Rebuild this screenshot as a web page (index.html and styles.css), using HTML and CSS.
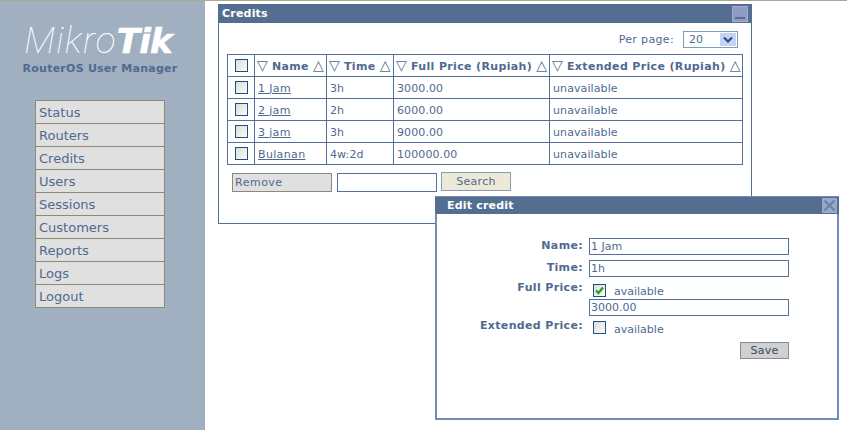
FILE: index.html
```html
<!DOCTYPE html>
<html lang="en">
<head>
<meta charset="utf-8">
<title>Credits</title>
<link rel="stylesheet" href="styles.css">
</head>
<body>
<div class="page">
  <aside class="sidebar">
    <div class="logo"><span class="logo-light">Mikro</span><span class="logo-bold">Tik</span></div>
    <div class="subtitle">RouterOS User Manager</div>
    <nav class="nav">
      <a>Status</a><a>Routers</a><a>Credits</a><a>Users</a><a>Sessions</a><a>Customers</a><a>Reports</a><a>Logs</a><a>Logout</a>
    </nav>
  </aside>
  <main class="main">
    <section class="panel">
      <header class="bar"><span class="bar-title">Credits</span><span class="min-btn"><i></i></span></header>
      <div class="perpage">
        <span class="perpage-label">Per page:</span>
        <span class="select"><span>20</span><span class="arrow"><svg width="10" height="7" viewBox="0 0 10 7"><path d="M1 1.5l4 4 4-4" fill="none" stroke="#2f4a7c" stroke-width="2.2"/></svg></span></span>
      </div>
      <table class="grid">
        <colgroup><col class="c1"><col class="c2"><col class="c3"><col class="c4"><col class="c5"></colgroup>
        <thead>
          <tr>
            <th class="check"><span class="cb"></span></th>
            <th><span class="sort">▽</span> Name <span class="sort">△</span></th>
            <th><span class="sort">▽</span> Time <span class="sort">△</span></th>
            <th><span class="sort">▽</span> Full Price (Rupiah) <span class="sort">△</span></th>
            <th><span class="sort">▽</span> Extended Price (Rupiah) <span class="sort">△</span></th>
          </tr>
        </thead>
        <tbody>
          <tr><td class="check"><span class="cb"></span></td><td><a>1 Jam</a></td><td>3h</td><td>3000.00</td><td>unavailable</td></tr>
          <tr><td class="check"><span class="cb"></span></td><td><a>2 jam</a></td><td>2h</td><td>6000.00</td><td>unavailable</td></tr>
          <tr><td class="check"><span class="cb"></span></td><td><a>3 jam</a></td><td>3h</td><td>9000.00</td><td>unavailable</td></tr>
          <tr><td class="check"><span class="cb"></span></td><td><a>Bulanan</a></td><td>4w:2d</td><td>100000.00</td><td>unavailable</td></tr>
        </tbody>
      </table>
      <div class="actions">
        <span class="btn-remove">Remove</span>
        <span class="field search-field"></span>
        <span class="btn-search">Search</span>
      </div>
    </section>
  </main>
  <section class="dialog">
    <header class="bar dialog-bar"><span class="bar-title">Edit credit</span><span class="close-btn"><svg width="13" height="13" viewBox="0 0 13 13"><path d="M1.5 1.5l10 10M11.5 1.5l-10 10" stroke="#6d84a8" stroke-width="2.4" fill="none"/></svg></span></header>
    <div class="form">
      <label class="lbl">Name:</label><span class="field">1 Jam</span>
      <label class="lbl">Time:</label><span class="field">1h</span>
      <label class="lbl lbl-full">Full Price:</label>
      <span class="checkline checkline-full"><span class="cb"><svg width="11" height="11" viewBox="0 0 11 11"><path d="M2 5.5l2.5 2.5 4.5-5.5" fill="none" stroke="#21a121" stroke-width="2.2"/></svg></span><span class="avail">available</span></span>
      <span></span><span class="field">3000.00</span>
      <label class="lbl lbl-ext">Extended Price:</label>
      <span class="checkline"><span class="cb"></span><span class="avail avail-ext">available</span></span>
      <span></span><span class="save-row"><span class="btn-save">Save</span></span>
    </div>
  </section>
</div>
</body>
</html>
```
FILE: styles.css
```css
* { box-sizing: border-box; }
html, body { margin: 0; padding: 0; background: #fff; }
body {
  font-family: "DejaVu Sans", Verdana, sans-serif;
  font-size: 11px;
  color: #4f6a90;
  overflow: hidden;
}
.page {
  position: relative;
  display: flex;
  width: 847px;
  height: 430px;
  border-top: 1px solid #a9a994;
}
.sidebar {
  width: 205px;
  flex: none;
  background: #a0b0c0;
  display: flex;
  flex-direction: column;
  align-items: center;
}
.logo {
  margin-top: 21px;
  margin-right: 9px;
  height: 37px;
  line-height: 37px;
  color: #fff;
  white-space: nowrap;
}
.logo-light { font-family: Roboto, sans-serif; font-weight: 100; font-style: italic; font-size: 37px; letter-spacing: 1.2px; }
.logo-bold { font-family: "DejaVu Sans", sans-serif; font-weight: 700; font-style: italic; font-size: 34px; letter-spacing: -0.8px; -webkit-text-stroke: 0.6px #fff; }
.subtitle {
  margin-top: 3px;
  margin-right: 5px;
  font-weight: 700;
  font-size: 11px;
  letter-spacing: 0.25px;
  color: #4f6a90;
  white-space: nowrap;
}
.nav {
  margin-top: 25px;
  width: 130px;
  display: flex;
  flex-direction: column;
  border: 1px solid #8b8b7c;
  border-bottom: 0;
  margin-left: -5px;
}
.nav a {
  height: 23px;
  line-height: 23px;
  padding-left: 3px;
  background: #e0e0e0;
  border-bottom: 1px solid #8b8b7c;
  font-size: 13px;
  color: #4f6a90;
}
.main { flex: 1; padding: 3px 0 0 13px; }
.panel {
  width: 534px;
  height: 220px;
  border: 1px solid #54708f;
  border-top: 0;
  position: relative;
}
.bar {
  height: 19px;
  background: #536e90;
  color: #fff;
  font-weight: 700;
  display: flex;
  align-items: center;
  justify-content: space-between;
  padding-left: 4px;
  margin: 0 -1px;
}
.bar-title { font-size: 11px; letter-spacing: 0.2px; }
.min-btn {
  width: 16px;
  height: 16px;
  margin-right: 4px;
  background: #8f9dc6;
  border: 1px solid #a6b0cc;
  display: flex;
  align-items: flex-end;
  justify-content: center;
  padding-bottom: 2px;
}
.min-btn i { display: block; width: 10px; height: 2px; background: #5d6b96; }
.perpage {
  height: 31px;
  display: flex;
  justify-content: flex-end;
  align-items: center;
  gap: 9px;
  padding-right: 13px;
  padding-top: 1px;
}
.perpage-label { letter-spacing: 0.35px; }
.select {
  width: 55px;
  height: 17px;
  border: 1px solid #7f9db9;
  display: flex;
  align-items: center;
  justify-content: space-between;
  padding: 0 1px 0 5px;
}
.arrow {
  width: 16px;
  height: 13px;
  background: #c4d3f6;
  display: flex;
  align-items: center;
  justify-content: center;
  border-radius: 1px;
}
.grid {
  margin-left: 8px;
  width: 515px;
  border-collapse: collapse;
  table-layout: fixed;
}
.c1 { width: 27px; }
.c2 { width: 72px; }
.c3 { width: 67px; }
.c4 { width: 156px; }
.c5 { width: 193px; }
.grid th, .grid td {
  border: 1px solid #54709b;
  height: 22px;
  padding: 1px 3px 0;
  text-align: left;
  white-space: nowrap;
  overflow: hidden;
  font-size: 11px;
  font-weight: 400;
  letter-spacing: 0.1px;
}
.grid th { font-weight: 700; padding: 1px 0 0 2px; letter-spacing: 0.35px; }
.grid td a { text-decoration: underline; letter-spacing: 0.35px; }
.grid .check { text-align: center; padding: 0; }
.sort { font-weight: 400; font-size: 14px; line-height: 12px; letter-spacing: 0; }
.cb {
  display: inline-flex;
  align-items: center;
  justify-content: center;
  width: 13px;
  height: 13px;
  border: 1px solid #1c5180;
  background: linear-gradient(135deg, #dcdcd7, #fbfbf9);
  vertical-align: middle;
}
.actions {
  margin: 7px 0 0 13px;
  display: flex;
  align-items: flex-start;
}
.btn-remove {
  width: 100px;
  height: 19px;
  line-height: 17px;
  margin-top: 1px;
  border: 1px solid #8b8b7c;
  background: #e0e0e0;
  padding-left: 2px;
  letter-spacing: 0.5px;
}
.field {
  display: block;
  height: 17px;
  line-height: 15px;
  border: 1px solid #54709b;
  padding-left: 1px;
  white-space: nowrap;
}
.search-field { width: 100px; height: 19px; margin: 1px 0 0 5px; }
.btn-search {
  width: 70px;
  height: 19px;
  line-height: 17px;
  margin-left: 4px;
  border: 1px solid #8b9bb0;
  background: #ece9d8;
  text-align: center;
  letter-spacing: 0.3px;
}
.dialog {
  position: absolute;
  left: 435px;
  top: 195px;
  width: 404px;
  height: 224px;
  background: #fff;
  border: 2px solid #6f8db5;
  border-top: 0;
}
.dialog-bar {
  margin: 0 -2px;
  height: 18px;
  padding-left: 12px;
  border-top: 1px solid #6f8db5;
}
.close-btn {
  width: 15px;
  height: 15px;
  margin-right: 2px;
  background: #9aa8cc;
  display: flex;
  align-items: center;
  justify-content: center;
}
.form {
  margin-top: 24px;
  display: grid;
  grid-template-columns: 146px 200px;
  grid-template-rows: 17px 17px 12px 17px 16px 17px;
  column-gap: 6px;
  row-gap: 5px;
  align-items: start;
}
.lbl { text-align: right; font-weight: 700; line-height: 15px; white-space: nowrap; letter-spacing: 0.35px; }
.lbl-full { margin-top: -2px; }
.lbl-ext { margin-top: -3px; }
.checkline {
  display: flex;
  align-items: flex-start;
  padding-left: 4px;
  gap: 8px;
}
.checkline-full { margin-top: 2px; }
.avail { line-height: 12px; margin-top: 2px; }
.avail-ext { margin-top: 3px; }
.save-row { display: flex; justify-content: flex-end; }
.btn-save {
  width: 49px;
  height: 17px;
  line-height: 15px;
  text-align: center;
  color: #3b4a5c;
  background: #d0d0d0;
  border: 1px solid #7f8f9f;
  letter-spacing: 0.3px;
}
```
